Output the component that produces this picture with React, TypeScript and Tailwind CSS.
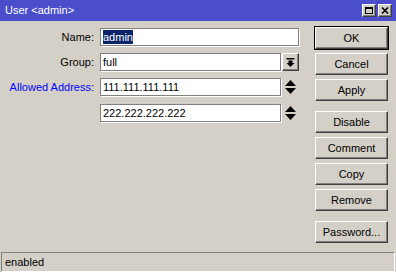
import React from "react";

const raised =
  "bg-[#d4d0c8] border border-t-white border-l-white border-r-[#404040] border-b-[#404040] shadow-[inset_-1px_-1px_0_#808080]";

function Btn({ label, def, extra }: { label: string; def?: boolean; extra?: string }) {
  return (
    <button
      className={`h-[22px] w-[73px] text-[11px] text-black ${raised} ${
        def ? "outline outline-1 outline-black" : ""
      } ${extra ?? ""}`}
    >
      {label}
    </button>
  );
}

function Field({ children, w }: { children: React.ReactNode; w: string }) {
  return (
    <div
      className={`${w} h-[18px] bg-white border border-[#808080] shadow-[1px_1px_0_#ffffff] flex items-center px-[2px] text-[11px] text-black`}
    >
      {children}
    </div>
  );
}

function Spinner() {
  return (
    <svg width="13" height="16" viewBox="0 0 13 16" className="ml-[3px]">
      <path d="M6.5 1 L12 7 L1 7 Z" fill="#000" />
      <path d="M1 9 L12 9 L6.5 15 Z" fill="#000" />
    </svg>
  );
}

export default function App() {
  return (
    <div
      className="w-[396px] h-[272px] bg-[#d4d0c8] flex flex-col overflow-hidden"
      style={{ fontFamily: '"Liberation Sans", Arial, sans-serif' }}
    >
      {/* title bar */}
      <div className="h-[21px] bg-[#4a4ecb] flex items-center pl-[5px] pr-[4px]">
        <span className="text-white text-[11px] flex-1">User &lt;admin&gt;</span>
        <div className="flex gap-[2px]">
          <div className={`w-[14px] h-[13px] flex items-center justify-center ${raised}`}>
            <div className="w-[8px] h-[7px] border border-black border-t-2" />
          </div>
          <div className={`w-[14px] h-[13px] flex items-center justify-center ${raised}`}>
            <svg width="8" height="7" viewBox="0 0 8 7">
              <path d="M1 0.5 L7 6.5 M7 0.5 L1 6.5" stroke="#000" strokeWidth="1.6" />
            </svg>
          </div>
        </div>
      </div>

      <div className="flex flex-1">
        {/* form */}
        <div className="flex flex-col gap-[7px] pt-[7px] w-[315px]">
          <div className="flex items-center">
            <span className="w-[94px] text-right text-[11px] text-black">Name:</span>
            <div className="ml-[6px]">
              <Field w="w-[199px]">
                <span className="bg-[#0a246a] text-white leading-[14px]">admin</span>
              </Field>
            </div>
          </div>
          <div className="flex items-center">
            <span className="w-[94px] text-right text-[11px] text-black">Group:</span>
            <div className="ml-[6px] flex">
              <Field w="w-[181px]">full</Field>
              <div className={`ml-[1px] w-[17px] h-[18px] flex items-center justify-center ${raised}`}>
                <svg width="9" height="9" viewBox="0 0 9 9">
                  <rect x="0.5" y="0" width="8" height="1.5" fill="#000" />
                  <path d="M2.5 2.5 H6.5 V5 H8.5 L4.5 9 L0.5 5 H2.5 Z" fill="#000" />
                </svg>
              </div>
            </div>
          </div>
          <div className="flex items-center">
            <span className="w-[94px] text-right text-[11px] text-[#0000ff]">Allowed Address:</span>
            <div className="ml-[6px] flex items-center">
              <Field w="w-[181px]">111.111.111.111</Field>
              <Spinner />
            </div>
          </div>
          <div className="flex items-center mt-[1px]">
            <span className="w-[94px]" />
            <div className="ml-[6px] flex items-center">
              <Field w="w-[181px]">222.222.222.222</Field>
              <Spinner />
            </div>
          </div>
        </div>

        {/* buttons */}
        <div className="flex flex-col gap-[4px] pt-[6px]">
          <Btn label="OK" def />
          <Btn label="Cancel" />
          <Btn label="Apply" />
          <Btn label="Disable" extra="mt-[6px]" />
          <Btn label="Comment" />
          <Btn label="Copy" />
          <Btn label="Remove" />
          <Btn label="Password..." extra="mt-[6px]" />
        </div>
      </div>

      {/* status bar */}
      <div className="mx-[1px] h-[20px] border border-t-[#808080] border-l-[#808080] border-r-white border-b-white flex items-center pl-[3px] text-[11px] text-black">
        enabled
      </div>
    </div>
  );
}
